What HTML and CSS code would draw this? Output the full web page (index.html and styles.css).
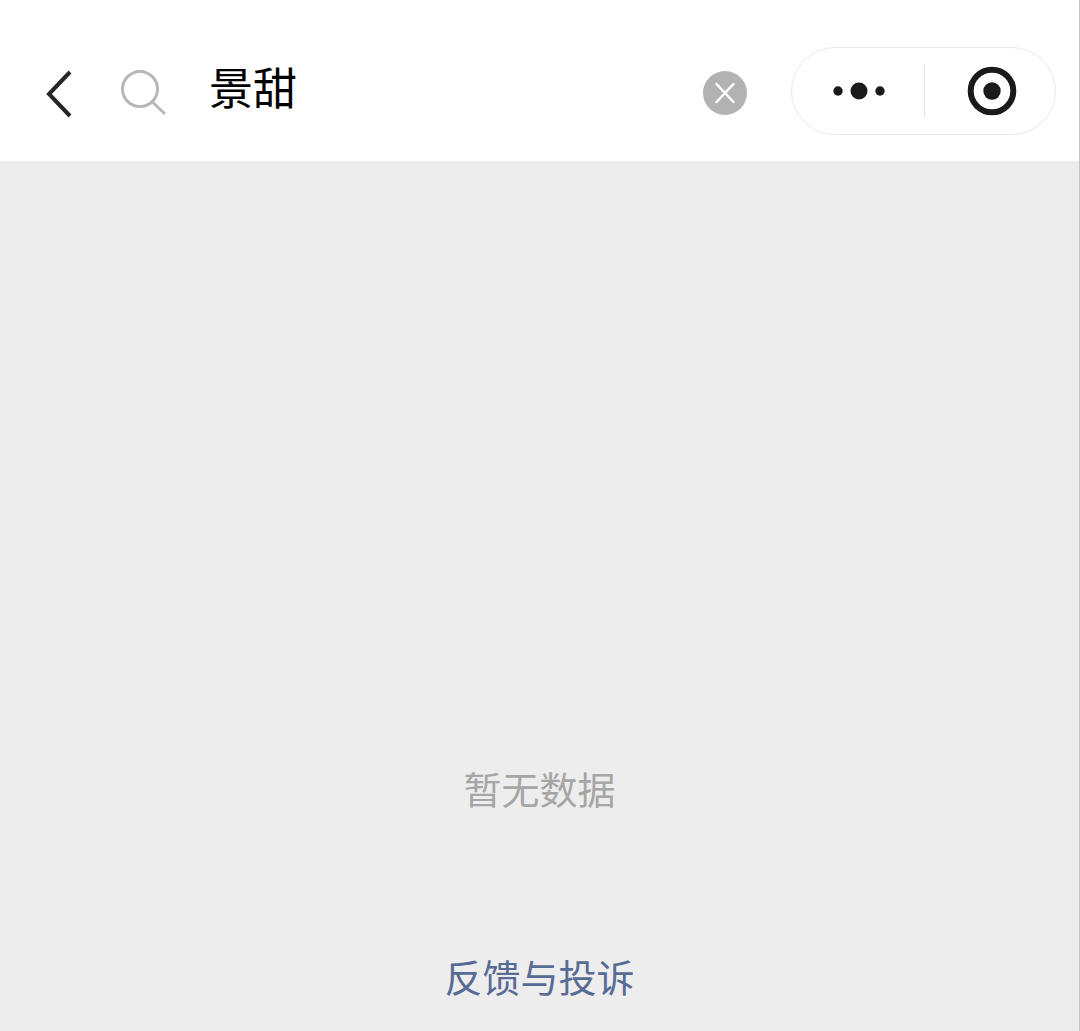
FILE: index.html
```html
<!DOCTYPE html>
<html lang="zh-CN">
<head>
    <meta charset="UTF-8">
    <meta name="viewport" content="width=device-width, initial-scale=1.0">
    <title>搜索</title>
    <link rel="stylesheet" href="styles.css">
</head>
<body>
    <header class="topbar">
        <button class="icon-btn back" type="button" aria-label="返回">
            <svg width="28" height="48" viewBox="0 0 28 48" fill="none" stroke="#262626" stroke-width="4">
                <path d="M26 2 L5 24 L26 46"/>
            </svg>
        </button>
        <form class="search" id="search-form">
            <label for="keyword" class="search-icon" aria-label="搜索">
                <svg width="48" height="48" viewBox="0 0 48 48" fill="none" stroke="#b8b8b8" stroke-width="3">
                    <circle cx="20" cy="20" r="17.5"/>
                    <path d="M32.5 33 L45 45"/>
                </svg>
            </label>
            <input type="text" id="keyword" value="景甜" autocomplete="off">
            <button class="icon-btn" id="clear" type="button" aria-label="清除">
                <svg width="44" height="44" viewBox="0 0 44 44">
                    <circle cx="22" cy="22" r="22" fill="#b2b2b2"/>
                    <path d="M13.5 13 L30.5 31 M30.5 13 L13.5 31" stroke="#fff" stroke-width="2.5" stroke-linecap="round"/>
                </svg>
            </button>
        </form>
        <div class="capsule">
            <button class="icon-btn" type="button" aria-label="更多">
                <svg width="52" height="48" viewBox="0 0 52 48" fill="#1a1a1a">
                    <circle cx="5" cy="24" r="4.7"/>
                    <circle cx="26" cy="24" r="8.5"/>
                    <circle cx="47" cy="24" r="4.7"/>
                </svg>
            </button>
            <button class="icon-btn" type="button" aria-label="关闭">
                <svg width="50" height="50" viewBox="0 0 50 50">
                    <circle cx="25" cy="25" r="21.3" fill="none" stroke="#1a1a1a" stroke-width="6"/>
                    <circle cx="25" cy="25" r="8.7" fill="#1a1a1a"/>
                </svg>
            </button>
        </div>
    </header>
    <main class="results">
        <p class="empty">暂无数据</p>
        <a class="feedback" href="#">反馈与投诉</a>
    </main>
    <script>
        const keyword = document.getElementById('keyword');

        document.getElementById('clear').addEventListener('click', function () {
            keyword.value = '';
            keyword.focus();
        });

        document.getElementById('search-form').addEventListener('submit', function (e) {
            e.preventDefault();
        });
    </script>
</body>
</html>
```

FILE: styles.css
```css
* {
    box-sizing: border-box;
}

body {
    font-family: "Noto Sans CJK SC", sans-serif;
    background-color: #ededed;
    border-right: 1px solid #c4c4c4;
    margin: 0;
    min-height: 100vh;
    display: flex;
    flex-direction: column;
}

.topbar {
    display: flex;
    align-items: center;
    background-color: #fff;
    padding: 47px 23px 26px 44px;
}

.icon-btn {
    display: flex;
    align-items: center;
    justify-content: center;
    padding: 0;
    border: none;
    background: none;
    cursor: pointer;
}

.back {
    padding-top: 6px;
}

.search {
    flex: 1;
    min-width: 0;
    display: flex;
    align-items: center;
    margin: 0 44px 0 48px;
    padding-top: 4px;
}

.search-icon {
    display: flex;
}

.search input {
    flex: 1;
    min-width: 0;
    height: 68px;
    margin-left: 41px;
    padding: 0 0 14px;
    border: none;
    outline: none;
    background: none;
    color: #000;
    font-family: inherit;
    font-size: 44px;
}

.capsule {
    display: flex;
    align-items: center;
    width: 265px;
    height: 88px;
    border: 1px solid #e8e8e8;
    border-radius: 44px;
}

.capsule .icon-btn {
    flex: 1;
    height: 54px;
}

.capsule .icon-btn + .icon-btn {
    border-left: 1px solid #e4e4e4;
    padding-left: 4px;
}

/* keeps the divider in the middle of the capsule */
.capsule .icon-btn:first-child {
    padding-right: 1px;
    padding-left: 4px;
}

.results {
    flex: 1;
    display: flex;
    flex-direction: column;
    align-items: center;
    justify-content: flex-end;
    gap: 132px;
    padding-bottom: 27px;
    font-size: 38px;
    line-height: 56px;
}

.empty {
    margin: 0;
    color: #a6a6a6;
}

.feedback {
    color: #576b95;
    text-decoration: none;
}
```
